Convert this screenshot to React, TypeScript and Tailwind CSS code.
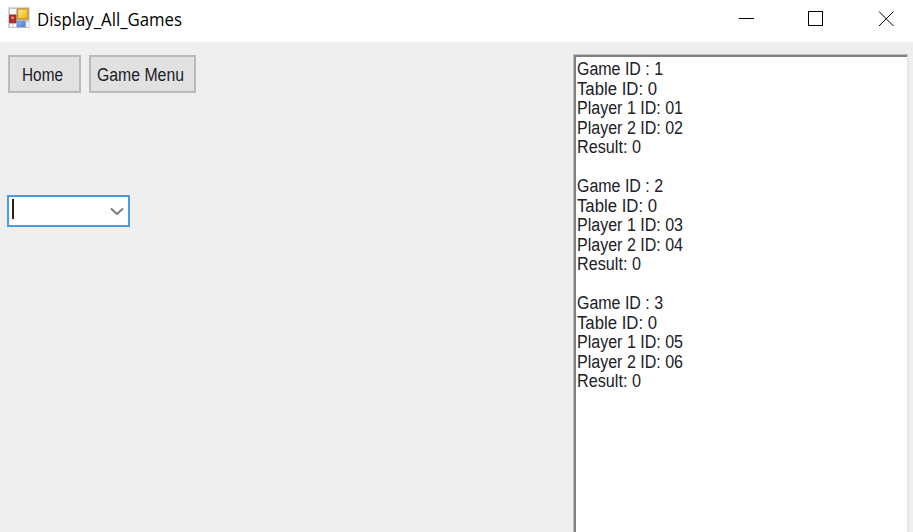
const games = [
  { id: '1', table: '0', p1: '01', p2: '02', result: '0' },
  { id: '2', table: '0', p1: '03', p2: '04', result: '0' },
  { id: '3', table: '0', p1: '05', p2: '06', result: '0' },
];

function FormIcon() {
  return (
    <svg width="22" height="22" viewBox="0 0 22 22" className="ml-2 mt-[7px] shrink-0">
      <defs>
        <linearGradient id="gold" x1="0" y1="0" x2="1" y2="1">
          <stop offset="0" stopColor="#ffe98a" />
          <stop offset="1" stopColor="#f0ae00" />
        </linearGradient>
        <linearGradient id="blue" x1="0" y1="0" x2="1" y2="1">
          <stop offset="0" stopColor="#8db8f5" />
          <stop offset="1" stopColor="#3f78d8" />
        </linearGradient>
      </defs>
      <rect x="0.3" y="0.3" width="21.2" height="20.7" fill="#c3c3c5" />
      <rect x="2" y="2" width="6" height="5" fill="#fff" />
      <rect x="2" y="17" width="2.5" height="3" fill="#fff" />
      <rect x="5.5" y="17" width="2.5" height="3" fill="#fff" />
      <rect x="18.5" y="14.5" width="2" height="5.5" fill="#fff" />
      <rect x="1.6" y="8.2" width="6.3" height="7.4" fill="#b82c25" stroke="#8d3030" />
      <rect x="3.4" y="9.6" width="2.4" height="2.4" fill="#e89488" />
      <rect x="9.7" y="2" width="10.3" height="10" fill="url(#gold)" stroke="#b8851b" />
      <rect x="9.5" y="14.3" width="7.5" height="5.5" fill="url(#blue)" stroke="#6389cc" strokeWidth="0.8" />
    </svg>
  );
}

function Line({ text, width }: { text: string; width: string }) {
  return (
    <div className="h-[19.5px] pl-[1px]">
      <svg className={`block h-[19.5px] overflow-visible ${width}`}>
        <text x="0" y="15.5" textLength="100%" lengthAdjust="spacingAndGlyphs" fill="#202026">
          {text}
        </text>
      </svg>
    </div>
  );
}

function Label({ text, width }: { text: string; width: string }) {
  return (
    <svg className={`block h-5 overflow-visible ${width}`}>
      <text x="0" y="17" textLength="100%" lengthAdjust="spacingAndGlyphs" fill="#202026">
        {text}
      </text>
    </svg>
  );
}

export default function App() {
  return (
    <div className="flex h-[532px] w-[913px] flex-col overflow-hidden bg-[#efefef] font-['Liberation_Sans',Arial,sans-serif] text-[18px]">
      <header className="flex h-[42px] shrink-0 items-start bg-white">
        <FormIcon />
        <svg className="ml-[7px] mt-[9px] block h-6 w-[145px] overflow-visible font-['Open_Sans','Noto_Sans',sans-serif] text-[17.5px]">
          <text x="0" y="17" textLength="100%" lengthAdjust="spacingAndGlyphs">
            Display_All_Games
          </text>
        </svg>
        <svg width="174" height="42" className="ml-auto" fill="none" stroke="#000">
          <path d="M0 18.5h15M69.5 11.5h14v14h-14z" shapeRendering="crispEdges" />
          <path d="M140 11.5l14.5 14.5M154.5 11.5L140 26" />
        </svg>
      </header>
      <main className="flex min-h-0 flex-1 justify-between">
        <section className="flex flex-col items-start">
          <div className="ml-2 mt-[13px] flex gap-2">
            <button className="flex h-[38px] w-[73px] items-center border-2 border-[#bababa] bg-[#e1e1e1] pl-3">
              <Label text="Home" width="w-[41px]" />
            </button>
            <button className="flex h-[38px] w-[107px] items-center border-2 border-[#bababa] bg-[#e1e1e1] pl-[6px]">
              <Label text="Game Menu" width="w-[87px]" />
            </button>
          </div>
          <div className="ml-[7px] mt-[102px] flex h-8 w-[123px] items-start justify-between border-2 border-[#4b9de2] bg-white">
            <div className="ml-[3px] mt-[2px] h-5 w-[1.5px] bg-[#222]" />
            <svg width="14" height="10" viewBox="0 0 14 10" className="mr-[4px] mt-[10px]" fill="none" stroke="#777" strokeWidth="1.8">
              <path d="M1 1.5l6 5.5 6-5.5" />
            </svg>
          </div>
        </section>
        <section className="mr-1 mt-3 w-[336px] border-l border-r-2 border-t border-l-[#bcbcbc] border-r-[#e6e6e6] border-t-[#bcbcbc] bg-white">
          <div className="h-full border-l-2 border-t-2 border-[#808080] pt-[2px]">
            {games.map((g) => (
              <div key={g.id} className="mb-[19.5px]">
                <Line text={`Game ID : ${g.id}`} width="w-[86px]" />
                <Line text={`Table ID: ${g.table}`} width="w-[80px]" />
                <Line text={`Player 1 ID: ${g.p1}`} width="w-[106px]" />
                <Line text={`Player 2 ID: ${g.p2}`} width="w-[106px]" />
                <Line text={`Result: ${g.result}`} width="w-[64px]" />
              </div>
            ))}
          </div>
        </section>
      </main>
    </div>
  );
}
